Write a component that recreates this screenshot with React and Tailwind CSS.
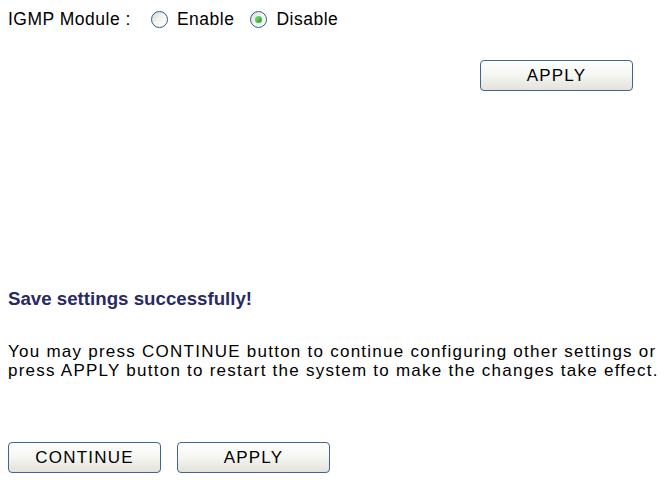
import React, { useState } from 'react';

// XP-style push button used by the router admin page
const XpButton = ({ children, className = '' }) => (
  <button
    type="button"
    className={`h-[31px] w-[153px] rounded-[4px] border border-[#3d6597] bg-gradient-to-b from-[#ffffff] via-[#f5f5f1] to-[#e3e2da] text-[17px] leading-none tracking-[1.2px] text-black ${className}`}
  >
    {children}
  </button>
);

const XpRadio = ({ checked, onClick }) => (
  <span
    onClick={onClick}
    className="inline-flex h-[17px] w-[17px] items-center justify-center rounded-full border border-[#2f5b88] bg-gradient-to-br from-[#dcdcd6] via-[#f4f4f0] to-[#ffffff]"
  >
    {checked && (
      <span className="h-[7px] w-[7px] rounded-full bg-gradient-to-br from-[#7ee07a] to-[#229a1c]" />
    )}
  </span>
);

const App = () => {
  const [igmp, setIgmp] = useState('disable');

  return (
    <div
      className="min-h-[480px] w-[667px] bg-white pl-2 text-black"
      style={{ fontFamily: '"Liberation Sans", Arial, sans-serif' }}
    >
      {/* IGMP row */}
      <div className="flex h-[38px] items-center pt-[1px] text-[17.5px] tracking-[0.5px]">
        <span>IGMP Module :</span>
        <label className="ml-[20px] flex items-center">
          <XpRadio checked={igmp === 'enable'} onClick={() => setIgmp('enable')} />
          <span className="ml-[9px]">Enable</span>
        </label>
        <label className="ml-[16px] flex items-center">
          <XpRadio checked={igmp === 'disable'} onClick={() => setIgmp('disable')} />
          <span className="ml-[9px]">Disable</span>
        </label>
      </div>

      <div className="mt-[22px] flex w-[625px] justify-end">
        <XpButton>APPLY</XpButton>
      </div>

      {/* Result message */}
      <h2 className="mt-[196px] text-[18.7px] font-bold leading-[23px] text-[#2a2a62]">
        Save settings successfully!
      </h2>

      <p className="mt-[32px] text-[17px] leading-[19px] tracking-[1.25px]">
        You may press CONTINUE button to continue configuring other settings or
        <br />
        press APPLY button to restart the system to make the changes take effect.
      </p>

      <div className="mt-[62px] flex gap-[16px]">
        <XpButton>CONTINUE</XpButton>
        <XpButton>APPLY</XpButton>
      </div>
    </div>
  );
};

export default App;
